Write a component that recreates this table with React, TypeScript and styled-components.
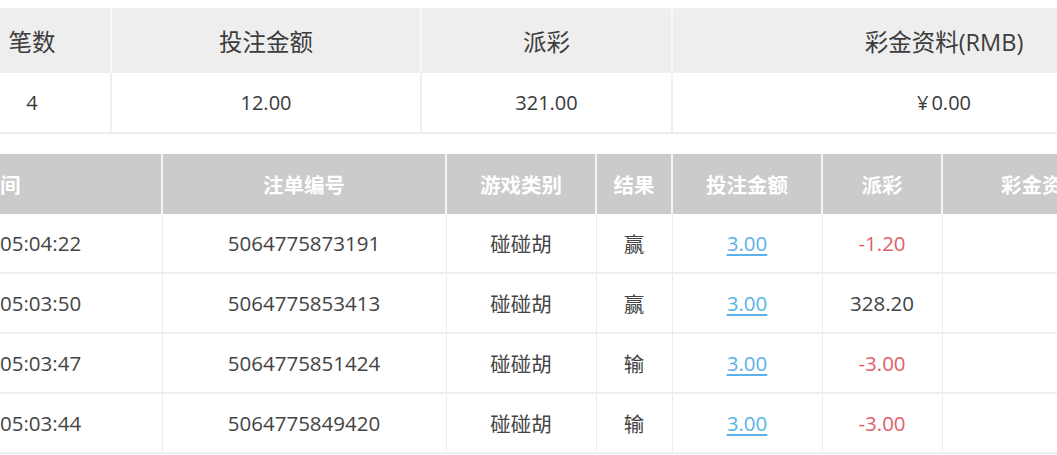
import React from "react";
import styled, { createGlobalStyle } from "styled-components";

const Global = createGlobalStyle`
  html, body { margin: 0; padding: 0; background: #ffffff; }
  body { width: 1057px; height: 455px; overflow: hidden; font-family: "Open Sans", "Noto Sans CJK SC", sans-serif; }
`;

const Page = styled.div`
  width: 1057px;
  height: 455px;
  overflow: hidden;
  padding-top: 8px;
  box-sizing: border-box;
`;

const Table = styled.table<{ $shift?: number }>`
  border-collapse: collapse;
  table-layout: fixed;
  margin-left: ${(p) => (p.$shift ? `-${p.$shift}px` : "0")};
`;

const SummaryHead = styled.th`
  height: 64px;
  padding: 0;
  background: #eeeeee;
  color: #3c3c3c;
  font-size: 23.5px;
  font-weight: 400;
  text-align: center;
  border-right: 2px solid #f8f8f8;
  border-top: 1px solid #f2f2f2;
`;

const SummaryCell = styled.td`
  height: 59px;
  padding: 0;
  color: #3a3a3a;
  font-size: 20px;
  text-align: center;
  border-right: 2px solid #f0f0f0;
  border-bottom: 2px solid #ececec;
`;

const Yen = styled.span`
  margin-right: 3px;
`;

const DetailTable = styled(Table)`
  margin-top: 20px;
`;

const DetailHead = styled.th<{ $left?: boolean }>`
  height: 60px;
  padding: 0;
  background: #cbcbcb;
  color: #ffffff;
  font-size: 20.5px;
  font-weight: 700;
  text-align: ${(p) => (p.$left ? "left" : "center")};
  border-right: 2px solid #f4f4f4;
`;

const DetailCell = styled.td<{ $left?: boolean; $tone?: "red" | "normal" }>`
  height: 58px;
  padding: 0;
  color: ${(p) => (p.$tone === "red" ? "#e0606a" : "#444444")};
  font-size: 20.5px;
  text-align: ${(p) => (p.$left ? "left" : "center")};
  border-right: 1px solid #ececec;
  border-bottom: 2px solid #efefef;
`;

const Link = styled.a`
  color: #5ab3e6;
  text-decoration: underline;
  text-underline-offset: 3px;
  cursor: pointer;
`;

type Row = { time: string; id: string; game: string; result: string; bet: string; payout: string; red: boolean };

const rows: Row[] = [
  { time: "05:04:22", id: "5064775873191", game: "碰碰胡", result: "赢", bet: "3.00", payout: "-1.20", red: true },
  { time: "05:03:50", id: "5064775853413", game: "碰碰胡", result: "赢", bet: "3.00", payout: "328.20", red: false },
  { time: "05:03:47", id: "5064775851424", game: "碰碰胡", result: "输", bet: "3.00", payout: "-3.00", red: true },
  { time: "05:03:44", id: "5064775849420", game: "碰碰胡", result: "输", bet: "3.00", payout: "-3.00", red: true },
];

export default function App() {
  return (
    <>
      <Global />
      <Page>
        <Table $shift={46} style={{ width: 1262 }}>
          <colgroup>
            <col style={{ width: 157 }} />
            <col style={{ width: 310 }} />
            <col style={{ width: 251 }} />
            <col style={{ width: 544 }} />
          </colgroup>
          <thead>
            <tr>
              <SummaryHead>笔数</SummaryHead>
              <SummaryHead>投注金额</SummaryHead>
              <SummaryHead>派彩</SummaryHead>
              <SummaryHead>彩金资料(RMB)</SummaryHead>
            </tr>
          </thead>
          <tbody>
            <tr>
              <SummaryCell>4</SummaryCell>
              <SummaryCell>12.00</SummaryCell>
              <SummaryCell>321.00</SummaryCell>
              <SummaryCell>
                <Yen>¥</Yen>0.00
              </SummaryCell>
            </tr>
          </tbody>
        </Table>
        <DetailTable style={{ width: 1142 }}>
          <colgroup>
            <col style={{ width: 162 }} />
            <col style={{ width: 284 }} />
            <col style={{ width: 150 }} />
            <col style={{ width: 76 }} />
            <col style={{ width: 150 }} />
            <col style={{ width: 120 }} />
            <col style={{ width: 200 }} />
          </colgroup>
          <thead>
            <tr>
              <DetailHead $left>间</DetailHead>
              <DetailHead>注单编号</DetailHead>
              <DetailHead>游戏类别</DetailHead>
              <DetailHead>结果</DetailHead>
              <DetailHead>投注金额</DetailHead>
              <DetailHead>派彩</DetailHead>
              <DetailHead>彩金资料</DetailHead>
            </tr>
          </thead>
          <tbody>
            {rows.map((r) => (
              <tr key={r.id}>
                <DetailCell $left>{r.time}</DetailCell>
                <DetailCell>{r.id}</DetailCell>
                <DetailCell>{r.game}</DetailCell>
                <DetailCell>{r.result}</DetailCell>
                <DetailCell>
                  <Link>{r.bet}</Link>
                </DetailCell>
                <DetailCell $tone={r.red ? "red" : "normal"}>{r.payout}</DetailCell>
                <DetailCell />
              </tr>
            ))}
          </tbody>
        </DetailTable>
      </Page>
    </>
  );
}
